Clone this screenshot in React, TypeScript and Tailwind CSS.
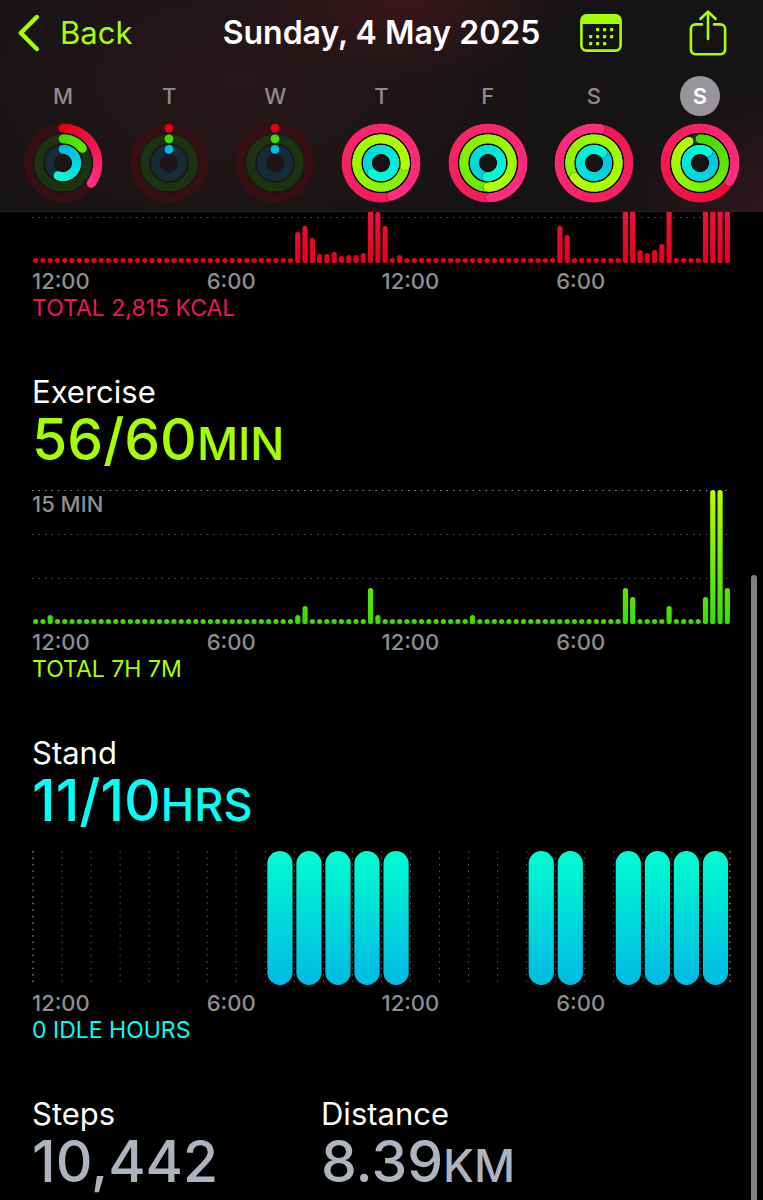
import React from "react";

type RGB = [number, number, number];

const RED: [RGB, RGB] = [[228, 0, 20], [255, 46, 130]];
const GREEN: [RGB, RGB] = [[60, 220, 0], [182, 255, 0]];
const BLUE: [RGB, RGB] = [[0, 184, 228], [0, 253, 208]];

interface Day {
  letter: string;
  name: string;
  move: number;
  exercise: number;
  stand: number;
  selected?: boolean;
}

const DAYS: Day[] = [
  { letter: "M", name: "Monday", move: 0.35, exercise: 0.147, stand: 0.56 },
  { letter: "T", name: "Tuesday", move: 0, exercise: 0, stand: 0 },
  { letter: "W", name: "Wednesday", move: 0, exercise: 0, stand: 0 },
  { letter: "T", name: "Thursday", move: 2.45, exercise: 2.27, stand: 1.62 },
  { letter: "F", name: "Friday", move: 2.49, exercise: 1.5, stand: 1.51 },
  { letter: "S", name: "Saturday", move: 2.03, exercise: 2.65, stand: 1.11 },
  { letter: "S", name: "Sunday", move: 1.34, exercise: 0.925, stand: 1.1, selected: true },
];

const STROKE = 8.8;

function mix([a, b]: [RGB, RGB], t: number) {
  const c = a.map((v, i) => Math.round(v + (b[i] - v) * t));
  return `rgb(${c[0]},${c[1]},${c[2]})`;
}

function point(r: number, turn: number) {
  const a = turn * Math.PI * 2;
  return [40 + r * Math.sin(a), 40 - r * Math.cos(a)];
}

function Ring({ r, value, colors, track }: { r: number; value: number; colors: [RGB, RGB]; track: string }) {
  const from = Math.max(0, value - 1);
  const steps = Math.max(1, Math.round((value - from) * 60));
  const shownTop = value < 0.3 ? value * 2 : 1;
  const colorAt = (v: number) => mix(colors, value === 0 ? 0 : (v / value) * shownTop);
  const segs: React.ReactNode[] = [];
  if (value > 0) {
    for (let i = 0; i < steps; i++) {
      const v0 = from + ((value - from) * i) / steps;
      const v1 = from + ((value - from) * (i + 1)) / steps;
      const [x0, y0] = point(r, v0);
      const [x1, y1] = point(r, Math.min(v1 + 0.02, value));
      segs.push(
        <path key={i} d={`M${x0} ${y0}A${r} ${r} 0 0 1 ${x1} ${y1}`} stroke={colorAt(v1)} strokeWidth={STROKE} fill="none" />
      );
    }
  }
  const [sx, sy] = point(r, 0);
  const [ex, ey] = point(r, value);
  const [hx, hy] = point(r, value + 0.9 / (r * 6.28));
  return (
    <g>
      <circle cx="40" cy="40" r={r} fill="none" stroke={track} strokeWidth={STROKE} />
      {value <= 1 && <circle cx={sx} cy={sy} r={STROKE / 2} fill={colorAt(0)} />}
      {segs}
      {value > 0.85 && <circle cx={hx} cy={hy} r={STROKE / 2} fill="#000" opacity="0.25" />}
      {value > 0 && <circle cx={ex} cy={ey} r={STROKE / 2} fill={colorAt(value)} />}
    </g>
  );
}

function Rings({ day }: { day: Day }) {
  const full = day.move > 1;
  return (
    <svg className="size-20" viewBox="0 0 80 80" aria-hidden="true">
      {full && <circle cx="40" cy="40" r="35" fill="#050505" />}
      {full && <circle cx="40" cy="40" r="9" fill="#151314" />}
      <Ring r={34.8} value={day.move} colors={RED} track="#360f14" />
      <Ring r={24.2} value={day.exercise} colors={GREEN} track="#1c3312" />
      <Ring r={13.6} value={day.stand} colors={BLUE} track="#142c36" />
    </svg>
  );
}

const SLOTS = 96;

function heights(values: Record<number, number>) {
  return Array.from({ length: SLOTS }, (_, i) => Math.max(5, values[i] ?? 5));
}

const MOVE_BARS = heights({
  36: 31, 37: 37, 38: 25, 39: 9, 40: 9, 41: 11, 42: 7, 43: 8, 44: 8, 45: 10, 46: 72, 47: 51, 48: 37, 50: 8,
  72: 37, 73: 28, 81: 96, 82: 84, 83: 13, 84: 10, 85: 13, 86: 19, 87: 70, 92: 90, 93: 110, 94: 120, 95: 80,
});

const EXERCISE_BARS = heights({
  2: 9, 36: 9, 37: 18, 46: 36, 47: 9, 60: 9, 81: 36, 82: 27, 87: 18, 92: 27, 93: 134, 94: 134, 95: 36,
});

const STAND_HOURS = [8, 9, 10, 11, 12, 17, 18, 20, 21, 22, 23];

function BarChart({ id, bars, low, high, label }: { id: string; bars: number[]; low: string; high: string; label: string }) {
  return (
    <svg className="block h-[134px] w-full shrink-0" role="img" aria-label={label}>
      <defs>
        <linearGradient id={id} gradientUnits="userSpaceOnUse" x1="0" y1="134" x2="0" y2="0">
          <stop offset="0" stopColor={low} />
          <stop offset="1" stopColor={high} />
        </linearGradient>
      </defs>
      {[0.5, 44.5, 88.5].map((y, i) => (
        <line key={y} x1="0" x2="100%" y1={y} y2={y} stroke={i === 0 ? "#9a9a9a" : "#5c5c5c"} strokeWidth="1" strokeDasharray="1.4 5.08" />
      ))}
      <g transform="translate(-2.6 0)">
        {bars.map((h, i) => (
          <rect key={i} x={`${((i + 0.5) / SLOTS) * 100}%`} y={134 - h} width="5.2" height={h} rx="2.6" fill={`url(#${id})`} />
        ))}
      </g>
    </svg>
  );
}

function StandChart() {
  return (
    <svg className="block h-[134px] w-full overflow-visible" role="img" aria-label="Stand hours">
      <defs>
        <linearGradient id="stand" x1="0" y1="1" x2="0" y2="0">
          <stop offset="0" stopColor="#00b9e4" />
          <stop offset="1" stopColor="#00fdd0" />
        </linearGradient>
      </defs>
      <g transform="translate(1 0)">
        {Array.from({ length: 25 }, (_, i) => {
          const edge = i === 0 || i === 24;
          const x = `${(i / 24) * 99.7}%`;
          return (
            <line key={i} x1={x} x2={x} y1="0" y2="134" stroke={edge ? "#8a8a8a" : "#606060"} strokeWidth={edge ? 1.4 : 1} strokeDasharray="1.4 5.08" />
          );
        })}
        <g transform="translate(2 0)">
          {STAND_HOURS.map((h) => (
            <rect key={h} x={`${(h / 24) * 99.7}%`} y="0" width="25.2" height="134" rx="12.6" fill="url(#stand)" />
          ))}
        </g>
      </g>
    </svg>
  );
}

function TimeAxis() {
  return (
    <div className="mt-1 grid grid-cols-4 text-[22px] leading-7 font-medium text-[#8e8e93]">
      <span>12:00</span>
      <span>6:00</span>
      <span>12:00</span>
      <span>6:00</span>
    </div>
  );
}

function Metric({ title, value, unit, color }: { title: string; value: string; unit?: string; color: string }) {
  return (
    <div>
      <h2 className="text-[31px] leading-10">{title}</h2>
      <p className={`flex items-baseline text-[57px] leading-14 font-medium whitespace-nowrap ${color}`}>
        <span>{value}</span>
        {unit && <span className="text-[45px] leading-10">{unit}</span>}
      </p>
    </div>
  );
}

function CalendarIcon() {
  const dots = [[17, 15], [24, 15], [31, 15], [10, 22], [17, 22], [24, 22], [31, 22], [10, 29], [17, 29], [24, 29]];
  return (
    <svg className="h-[38px] w-[42px]" viewBox="0 0 42 38" fill="none" aria-hidden="true">
      <rect x="1.4" y="1.4" width="39.2" height="35.2" rx="5" stroke="#a6ff00" strokeWidth="2.6" />
      <path d="M1 10V6a5 5 0 0 1 5-5h30a5 5 0 0 1 5 5v4z" fill="#a6ff00" />
      {dots.map(([x, y]) => (
        <rect key={`${x}-${y}`} x={x - 1} y={y - 1} width="3.2" height="3.2" rx="0.6" fill="#a6ff00" />
      ))}
    </svg>
  );
}

function ShareIcon() {
  return (
    <svg className="h-[46px] w-[38px]" viewBox="0 0 38 46" fill="none" stroke="#a6ff00" strokeWidth="2.6" strokeLinecap="round" strokeLinejoin="round" aria-hidden="true">
      <path d="M13 14.4H6.5a4.6 4.6 0 0 0-4.6 4.6v20.6a4.6 4.6 0 0 0 4.6 4.6h25a4.6 4.6 0 0 0 4.6-4.6V19a4.6 4.6 0 0 0-4.6-4.6H25" />
      <path d="M19 29V2M11.5 8.8 19 1.6l7.5 7.2" />
    </svg>
  );
}

export default function App() {
  return (
    <div className="relative min-h-screen overflow-hidden bg-black font-['Inter','Liberation_Sans',sans-serif] text-white">
      <header className="border-b border-[#242224] bg-[#151314] bg-[radial-gradient(ellipse_170px_80px_at_53%_0%,#3a161b,transparent),radial-gradient(ellipse_330px_190px_at_31%_38%,#271619,transparent),radial-gradient(ellipse_150px_110px_at_100%_95%,#2e161c,transparent)]">
        <nav className="grid h-[65px] grid-cols-[1fr_auto_1fr] items-center px-[18px]">
          <button type="button" className="flex items-center gap-5 justify-self-start text-[31px] leading-10 text-[#a6ff00]">
            <svg className="h-[38px] w-[22px]" viewBox="0 0 22 38" fill="none" stroke="currentColor" strokeWidth="4.4" strokeLinecap="round" strokeLinejoin="round" aria-hidden="true">
              <path d="M18.8 3 2.8 19l16 16" />
            </svg>
            Back
          </button>
          <h1 className="text-[32px] leading-10 font-semibold whitespace-nowrap">Sunday, 4 May 2025</h1>
          <div className="flex items-center gap-[67px] justify-self-end pr-[18px]">
            <button type="button" aria-label="Calendar"><CalendarIcon /></button>
            <button type="button" aria-label="Share"><ShareIcon /></button>
          </div>
        </nav>
        <div className="grid grid-cols-7 px-2.5 pt-[11px] pb-2">
          {DAYS.map((day) => (
            <button key={day.name} type="button" aria-label={day.name} className="flex flex-col items-center gap-[7px]">
              <span
                className={
                  day.selected
                    ? "flex size-10 items-center justify-center rounded-full bg-[#98969c] text-[22px] leading-7 font-semibold text-white"
                    : "flex size-10 items-center justify-center text-[22px] leading-7 font-medium text-[#8e8a8f]"
                }
              >
                {day.letter}
              </span>
              <Rings day={day} />
            </button>
          ))}
        </div>
      </header>

      <main className="flex flex-col gap-[51px] px-8">
        <section>
          <div className="flex h-[51px] flex-col justify-end overflow-hidden">
            <BarChart id="move" bars={MOVE_BARS} low="#e60016" high="#ff2e80" label="Move, kilocalories" />
          </div>
          <TimeAxis />
          <p className="text-[23px] leading-[26px] text-[#f0155a]">TOTAL 2,815 KCAL</p>
        </section>

        <section>
          <Metric title="Exercise" value="56/60" unit="MIN" color="text-[#a6ff00]" />
          <div className="relative mt-[22px]">
            <BarChart id="exercise" bars={EXERCISE_BARS} low="#3adc00" high="#b6ff00" label="Exercise, minutes" />
            <span className="absolute top-0 left-0 text-[22px] leading-7 font-medium text-[#8e8e93]">15 MIN</span>
          </div>
          <TimeAxis />
          <p className="text-[23px] leading-[26px] text-[#a6ff00]">TOTAL 7H 7M</p>
        </section>

        <section>
          <Metric title="Stand" value="11/10" unit="HRS" color="text-[#00fff6]" />
          <div className="mt-[22px]">
            <StandChart />
          </div>
          <TimeAxis />
          <p className="text-[23px] leading-[26px] text-[#00fff0]">0 IDLE HOURS</p>
        </section>

        <section className="grid grid-cols-[289px_1fr]">
          <Metric title="Steps" value="10,442" color="text-[#aeb3c0]" />
          <Metric title="Distance" value="8.39" unit="KM" color="text-[#aeb3c0]" />
        </section>
      </main>

      <div className="absolute top-[575px] right-1.5 bottom-0 w-1.5 rounded-t-full bg-[#808080]" aria-hidden="true" />
    </div>
  );
}
